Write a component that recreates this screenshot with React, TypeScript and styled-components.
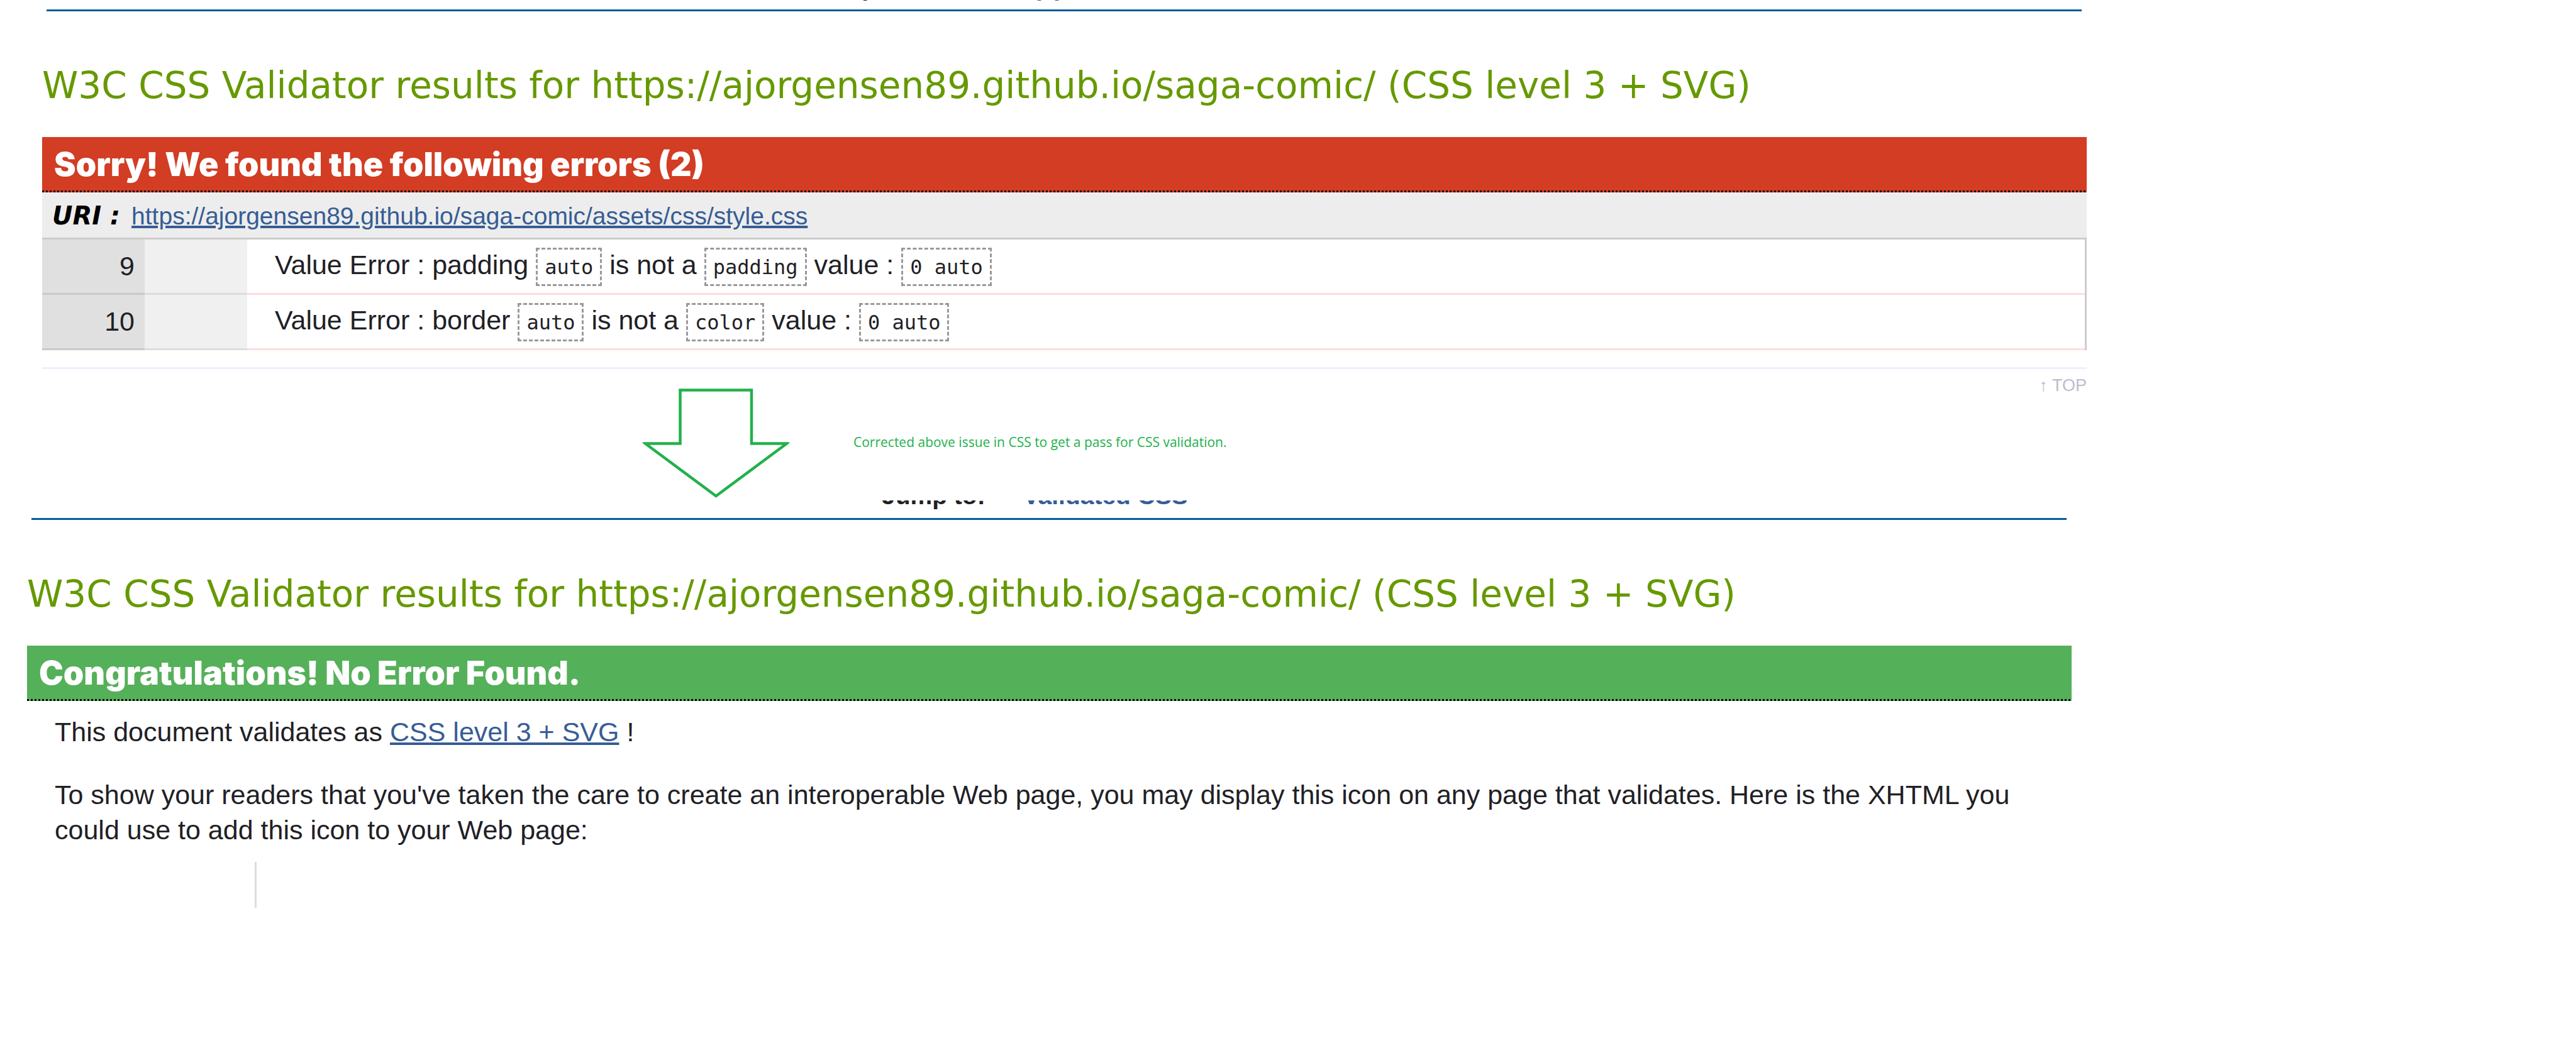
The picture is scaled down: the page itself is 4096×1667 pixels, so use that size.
import React from "react";
import styled, { createGlobalStyle } from "styled-components";

const GlobalStyle = createGlobalStyle`
  *, *::before, *::after { box-sizing: border-box; }
  body { margin: 0; background: #fff; color: #1f2126; font-family: "Liberation Sans", Arial, sans-serif; }
`;

const Page = styled.main`
  display: flex;
  flex-direction: column;
`;

const Report = styled.section<{ $left: number; $right: number }>`
  padding: 0 ${(p) => p.$right}px 0 ${(p) => p.$left}px;
`;

const JumpBar = styled.nav<{ $height: number; $indent: number }>`
  display: flex;
  align-items: flex-end;
  gap: 60px;
  height: ${(p) => p.$height}px;
  margin: 0 8px 0 7px;
  padding-left: ${(p) => p.$indent}px;
  border-bottom: 3px solid #005a9c;
  overflow: hidden;
  font-size: 39px;
  font-weight: 700;
  line-height: 44px;
`;

const JumpLabel = styled.span`
  padding-bottom: 13px;
`;

const JumpLink = styled.a`
  padding-bottom: 13px;
  color: #365d95;
  text-decoration: none;
`;

const Title = styled.h2`
  margin: 82px 0 46px;
  color: #690;
  font-family: "DejaVu Sans", Verdana, sans-serif;
  font-size: 58px;
  font-weight: 400;
  line-height: 72px;
`;

const Banner = styled.h3<{ $tone: string }>`
  margin: 0;
  padding: 16px 19px;
  color: #fff;
  background: repeating-linear-gradient(90deg, #000 0 3px, transparent 3px 6px) bottom / 100% 3px no-repeat
    ${(p) => p.$tone};
  font-family: Inter, "Liberation Sans", sans-serif;
  font-size: 52px;
  font-weight: 900;
  line-height: 56px;
`;

const UriRow = styled.h4`
  margin: 0;
  padding: 15px 16px 12px;
  border-bottom: 3px solid #ccc;
  background: #ededed;
  font-size: 39px;
  font-weight: 400;
  line-height: 45px;
`;

const UriLabel = styled.span`
  margin-right: 18px;
  color: #000;
  font-family: "DejaVu Sans", Verdana, sans-serif;
  font-size: 40px;
  font-style: italic;
  font-weight: 700;
  line-height: 1;
`;

const TextLink = styled.a`
  color: #365d95;
  text-decoration: underline;
  text-decoration-thickness: 4px;
`;

const ErrorTable = styled.table`
  width: 100%;
  border-spacing: 0;
  border-right: 3px solid #ccc;
  font-size: 43px;
  line-height: 56px;
`;

const LineCell = styled.td`
  width: 163px;
  padding: 14px 16px;
  border-bottom: 3px solid #c9c9c9;
  background: #e0e0e0;
  text-align: right;
  vertical-align: top;
`;

const ContextCell = styled.td`
  width: 163px;
  padding: 0;
  border-bottom: 3px solid #dcdcdc;
  background: #f0f0f0;
`;

const MessageCell = styled.td`
  padding: 12px 44px 17px;
  border-bottom: 3px solid #fdd;
  vertical-align: top;
`;

const Code = styled.code`
  padding: 9px 11px 8px;
  border: 3px dashed #999;
  font-family: "DejaVu Sans Mono", Consolas, monospace;
  font-size: 32px;
  line-height: 1;
`;

const ReportFoot = styled.footer`
  display: flex;
  justify-content: space-between;
  align-items: flex-start;
  margin-top: 27px;
  border-top: 3px solid #eef;
`;

const Note = styled.figure`
  display: flex;
  align-items: center;
  gap: 102px;
  margin: 0;
  padding: 31px 0 3px 955px;
`;

const NoteText = styled.figcaption`
  padding-bottom: 6px;
  color: #22b14c;
  font-family: "Open Sans", "Segoe UI", sans-serif;
  font-size: 21px;
  line-height: 28px;
`;

const TopLink = styled.a`
  padding-top: 10px;
  color: #bbbbcc;
  font-size: 27px;
  line-height: 32px;
  text-decoration: none;
`;

const Body = styled.div`
  padding: 21px 44px 0;
`;

const Paragraph = styled.p`
  margin: 0 0 44px;
  font-size: 43px;
  line-height: 56px;
  &:last-child { margin-bottom: 0; }
`;

const IconCellEdge = styled.div`
  height: 73px;
  margin: 23px 0 0 362px;
  border-left: 3px solid #ddd;
`;

const DownArrow = () => (
  <svg width="233" height="175" viewBox="0 0 233 175" fill="none" stroke="#22b14c" strokeWidth="4.5" aria-hidden="true">
    <path d="M59.5 2.5H173V87.500H229L116.500 171L4 87.500H59.500Z" />
  </svg>
);

type Part = { text: string; code?: boolean };

const errors: { line: number; parts: Part[] }[] = [
  {
    line: 9,
    parts: [
      { text: "Value Error : padding " },
      { text: "auto", code: true },
      { text: " is not a " },
      { text: "padding", code: true },
      { text: " value : " },
      { text: "0 auto", code: true },
    ],
  },
  {
    line: 10,
    parts: [
      { text: "Value Error : border " },
      { text: "auto", code: true },
      { text: " is not a " },
      { text: "color", code: true },
      { text: " value : " },
      { text: "0 auto", code: true },
    ],
  },
];

const title = "W3C CSS Validator results for https://ajorgensen89.github.io/saga-comic/ (CSS level 3 + SVG)";
const sheet = "https://ajorgensen89.github.io/saga-comic/assets/css/style.css";

export default function App() {
  return (
    <Page>
      <GlobalStyle />
      <Report $left={67} $right={778}>
        <JumpBar $height={18} $indent={1216}>
          <JumpLabel>Jump to:</JumpLabel>
          <JumpLink href="#errors">Errors (2)</JumpLink>
        </JumpBar>
        <Title>{title}</Title>
        <Banner id="errors" $tone="#d23d24">Sorry! We found the following errors (2)</Banner>
        <UriRow>
          <UriLabel>URI :</UriLabel>
          <TextLink href={sheet}>{sheet}</TextLink>
        </UriRow>
        <ErrorTable>
          <tbody>
            {errors.map((e) => (
              <tr key={e.line}>
                <LineCell>{e.line}</LineCell>
                <ContextCell />
                <MessageCell>
                  {e.parts.map((p, i) => (p.code ? <Code key={i}>{p.text}</Code> : p.text))}
                </MessageCell>
              </tr>
            ))}
          </tbody>
        </ErrorTable>
        <ReportFoot>
          <Note>
            <DownArrow />
            <NoteText>Corrected above issue in CSS to get a pass for CSS validation.</NoteText>
          </Note>
          <TopLink href="#">↑ TOP</TopLink>
        </ReportFoot>
      </Report>
      <Report $left={43} $right={802}>
        <JumpBar $height={31} $indent={1352}>
          <JumpLabel>Jump to:</JumpLabel>
          <JumpLink href="#css">Validated CSS</JumpLink>
        </JumpBar>
        <Title>{title}</Title>
        <Banner $tone="#55b05a">Congratulations! No Error Found.</Banner>
        <Body>
          <Paragraph>
            This document validates as <TextLink href="#css">CSS level 3 + SVG</TextLink> !
          </Paragraph>
          <Paragraph>
            To show your readers that you've taken the care to create an interoperable Web page, you may display this
            icon on any page that validates. Here is the XHTML you could use to add this icon to your Web page:
          </Paragraph>
        </Body>
        <IconCellEdge />
      </Report>
    </Page>
  );
}
